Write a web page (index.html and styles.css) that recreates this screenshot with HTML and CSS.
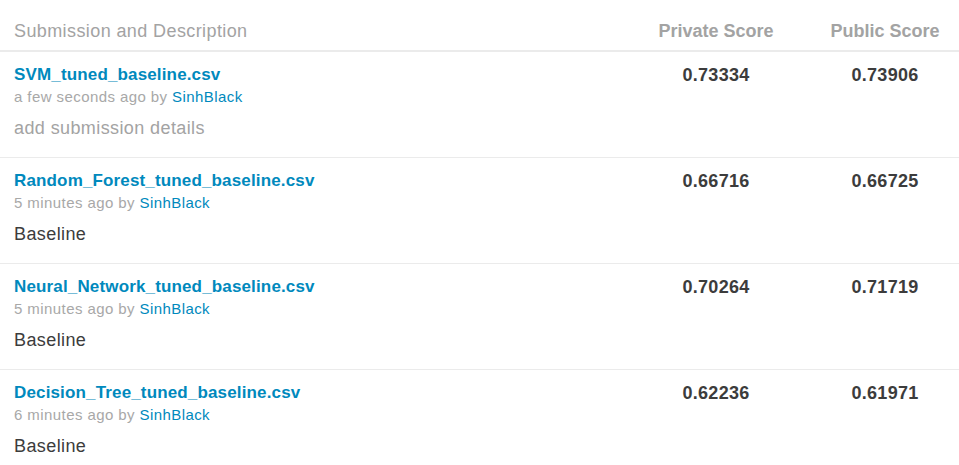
FILE: index.html
```html
<!DOCTYPE html>
<html>
<head>
<meta charset="utf-8">
<link rel="stylesheet" href="styles.css">
</head>
<body>
<div class="table">
  <div class="row head">
    <div class="cell desc-head">Submission and Description</div>
    <div class="cell score-head">Private Score</div>
    <div class="cell score-head">Public Score</div>
  </div>
  <div class="row">
    <div class="cell">
      <a class="file">SVM_tuned_baseline.csv</a>
      <div class="meta">a few seconds ago by <a class="user">SinhBlack</a></div>
      <div class="desc muted">add submission details</div>
    </div>
    <div class="cell score">0.73334</div>
    <div class="cell score">0.73906</div>
  </div>
  <div class="row">
    <div class="cell">
      <a class="file">Random_Forest_tuned_baseline.csv</a>
      <div class="meta">5 minutes ago by <a class="user">SinhBlack</a></div>
      <div class="desc">Baseline</div>
    </div>
    <div class="cell score">0.66716</div>
    <div class="cell score">0.66725</div>
  </div>
  <div class="row">
    <div class="cell">
      <a class="file">Neural_Network_tuned_baseline.csv</a>
      <div class="meta">5 minutes ago by <a class="user">SinhBlack</a></div>
      <div class="desc">Baseline</div>
    </div>
    <div class="cell score">0.70264</div>
    <div class="cell score">0.71719</div>
  </div>
  <div class="row">
    <div class="cell">
      <a class="file">Decision_Tree_tuned_baseline.csv</a>
      <div class="meta">6 minutes ago by <a class="user">SinhBlack</a></div>
      <div class="desc">Baseline</div>
    </div>
    <div class="cell score">0.62236</div>
    <div class="cell score">0.61971</div>
  </div>
</div>
</body>
</html>
```
FILE: styles.css
```css
* { box-sizing: border-box; }
html, body {
  margin: 0;
  padding: 0;
  background: #fff;
  font-family: "Liberation Sans", Arial, sans-serif;
  color: #3c3c3c;
}
.table {
  width: 959px;
}
.row {
  display: grid;
  grid-template-columns: 1fr 148px 148px;
  column-gap: 21px;
  padding-left: 14px;
  height: 106px;
  border-bottom: 1px solid #ebebeb;
  padding-top: 11px;
}
.row.head {
  height: 52px;
  padding-top: 20px;
  border-bottom: 2px solid #ebebeb;
}
.desc-head {
  font-size: 18px;
  letter-spacing: 0.4px;
  color: #a3a3a3;
  line-height: 22px;
}
.score-head {
  font-size: 18px;
  font-weight: bold;
  color: #a3a3a3;
  text-align: center;
  line-height: 22px;
}
.file {
  display: block;
  font-size: 17px;
  letter-spacing: 0.15px;
  font-weight: bold;
  color: #0089bd;
  line-height: 24px;
}
.meta {
  font-size: 15px;
  letter-spacing: 0.42px;
  color: #a8a8a8;
  line-height: 20px;
}
.user {
  color: #0089bd;
}
.desc {
  font-size: 18px;
  letter-spacing: 0.4px;
  color: #3c3c3c;
  margin-top: 10px;
  line-height: 22px;
}
.desc.muted {
  color: #a3a3a3;
}
.score {
  text-align: center;
  font-size: 18px;
  letter-spacing: 0.3px;
  font-weight: bold;
  color: #3c3c3c;
  line-height: 24px;
}
```
